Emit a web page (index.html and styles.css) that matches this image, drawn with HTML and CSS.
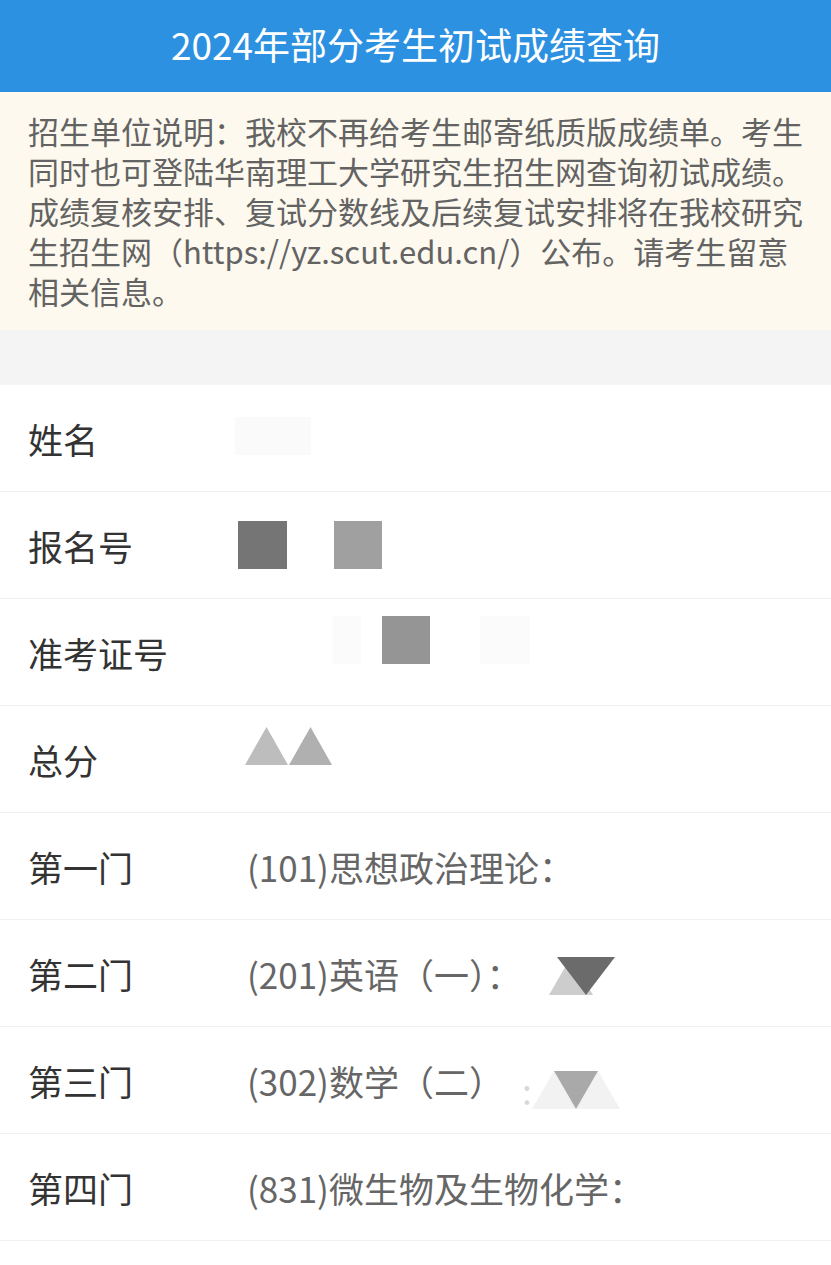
FILE: index.html
```html
<!DOCTYPE html>
<html lang="zh-CN">
  <head>
    <meta charset="UTF-8" />
    <meta name="viewport" content="width=device-width, initial-scale=1.0" />
    <title>2024年部分考生初试成绩查询</title>
    <link rel="stylesheet" href="styles.css">
  </head>
  <body>
    <header class="top">2024年部分考生初试成绩查询</header>

    <div class="notice">
      招生单位说明：我校不再给考生邮寄纸质版成绩单。考生同时也可登陆华南理工大学研究生招生网查询初试成绩。成绩复核安排、复试分数线及后续复试安排将在我校研究生招生网（https://yz.scut.edu.cn/）公布。请考生留意相关信息。
    </div>

    <div class="gap"></div>

    <ul class="list">
      <li class="row">
        <span class="label">姓名</span>
        <span class="value">
          <svg class="mask name" width="76" height="38"><rect width="76" height="38" fill="#fafafa" /></svg>
        </span>
      </li>
      <li class="row">
        <span class="label">报名号</span>
        <span class="value">
          <svg class="mask reg" width="145" height="48">
            <rect x="0" y="0" width="49" height="48" fill="#757575" />
            <rect x="96" y="0" width="48" height="48" fill="#a0a0a0" />
          </svg>
        </span>
      </li>
      <li class="row">
        <span class="label">准考证号</span>
        <span class="value">
          <svg class="mask ticket" width="290" height="48">
            <rect x="86" y="0" width="28" height="48" fill="#fbfbfb" />
            <rect x="135" y="0" width="48" height="48" fill="#959595" />
            <rect x="233" y="0" width="50" height="48" fill="#fbfbfb" />
          </svg>
        </span>
      </li>
      <li class="row">
        <span class="label">总分</span>
        <span class="value">
          <svg class="mask total" width="88" height="38">
            <polygon points="0,38 21.5,0 43,38" fill="#bdbdbd" />
            <polygon points="44,38 65.5,0 87,38" fill="#b0b0b0" />
          </svg>
        </span>
      </li>
      <li class="row">
        <span class="label">第一门</span>
        <span class="value">(101)思想政治理论：</span>
      </li>
      <li class="row">
        <span class="label">第二门</span>
        <span class="value">(201)英语（一）：
          <svg class="mask second" width="66" height="38">
            <polygon points="0,38 22,0 44,38" fill="#cdcdcd" />
            <polygon points="8,0 66,0 37,38" fill="#6b6b6b" />
          </svg>
        </span>
      </li>
      <li class="row">
        <span class="label">第三门</span>
        <span class="value">(302)数学（二）<span class="faint">:</span>
          <svg class="mask third" width="100" height="38">
            <polygon points="0,38 22,0 44,38" fill="#f2f2f2" />
            <polygon points="44,38 66,0 88,38" fill="#f2f2f2" />
            <polygon points="22,0 66,0 44,38" fill="#a9a9a9" />
          </svg>
        </span>
      </li>
      <li class="row">
        <span class="label">第四门</span>
        <span class="value">(831)微生物及生物化学：</span>
      </li>
    </ul>
  </body>
</html>
```

FILE: styles.css
```css
* {
  box-sizing: border-box;
}
body {
  margin: 0;
  background: #fff;
  font-family: "Noto Sans CJK SC", "Noto Sans", sans-serif;
}
.top {
  height: 92px;
  display: flex;
  justify-content: center;
  align-items: center;
  background: #2d91e2;
  color: #fff;
  font-size: 37px;
  padding-bottom: 4px;
}
.notice {
  background: #fdf9ee;
  color: #636363;
  font-size: 31px;
  line-height: 40px;
  padding: 19px 28px 19px;
  height: 238px;
  word-break: break-all;
}
.gap {
  height: 55px;
  background: #f4f4f4;
}
.list {
  list-style: none;
  margin: 0;
  padding: 0 0 24px;
  border-bottom: 2px solid #ededed;
}
.row {
  height: 107px;
  display: flex;
  align-items: center;
  border-bottom: 1px solid #f0f0f0;
  font-size: 35px;
}
.label {
  width: 247px;
  flex-shrink: 0;
  padding-left: 28px;
  color: #333;
}
.value {
  display: flex;
  align-items: center;
  color: #666;
  white-space: nowrap;
}
.faint {
  color: #d8d8d8;
  margin-left: 18px;
  margin-top: 18px;
}
.mask {
  display: block;
}
.mask.name {
  margin-left: -12px;
  margin-top: -4px;
}
.mask.reg {
  margin-left: -9px;
}
.mask.ticket {
  margin-left: 0;
  margin-bottom: 24px;
}
.mask.total {
  margin-left: -2px;
  margin-bottom: 26px;
}
.mask.second {
  margin-left: 28px;
  margin-top: 6px;
}
.mask.third {
  margin-left: 0;
  margin-top: 20px;
}
```
